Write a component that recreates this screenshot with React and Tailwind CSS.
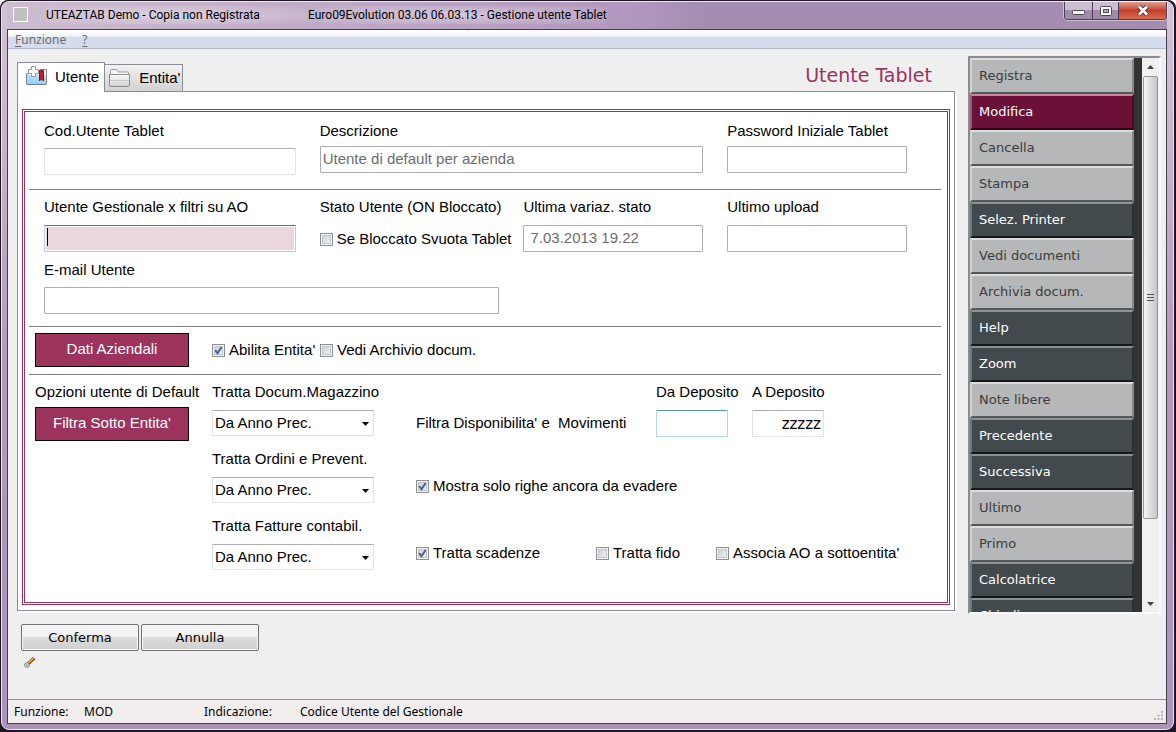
import { useState } from "react";

const menuItems = [
  { label: "Registra", tone: "off" },
  { label: "Modifica", tone: "active" },
  { label: "Cancella", tone: "off" },
  { label: "Stampa", tone: "off" },
  { label: "Selez. Printer", tone: "on" },
  { label: "Vedi documenti", tone: "off" },
  { label: "Archivia docum.", tone: "off" },
  { label: "Help", tone: "on" },
  { label: "Zoom", tone: "on" },
  { label: "Note libere", tone: "off" },
  { label: "Precedente", tone: "on" },
  { label: "Successiva", tone: "on" },
  { label: "Ultimo", tone: "off" },
  { label: "Primo", tone: "off" },
  { label: "Calcolatrice", tone: "on" },
  { label: "Chiudi", tone: "on" },
];

const tones = {
  off: "bg-[#b5b7b9] text-[#3c3c3c] border-t-[#dcdddd] border-l-[#d0d1d2] border-r-[#85878a] border-b-[#55585a]",
  on: "bg-[#434a4d] text-white border-t-[#8c9294] border-l-[#70777a] border-r-[#2b3032] border-b-[#15181a]",
  active: "bg-[#6b1138] text-white border-t-[#c08aa0] border-l-[#9c5673] border-r-[#480a25] border-b-[#2c0415]",
};

const boxes = {
  plain: "border-[#e2e3ea] border-t-[#abadb3] bg-white",
  grey: "border-[#abadb3] bg-white",
  focus: "border-[#b5cfe7] border-t-[#3d7bad] bg-[#ead6dd] shadow-[inset_0_0_0_1px_#fff]",
  hot: "border-[#b5d5ea] border-t-[#5794bf] bg-white",
};

const TextBox = ({ id, look = "grey", className = "px-0.5", ...rest }) => (
  <input
    id={id}
    type="text"
    className={`block h-[27px] w-full rounded-[1px] border pb-0.5 text-[15px] text-[#6d6d6d] outline-none ${boxes[look]} ${className}`}
    {...rest}
  />
);

const Check = ({ id, label, checked = false, className = "" }) => {
  const [on, setOn] = useState(checked);
  return (
    <label htmlFor={id} className={`flex items-center gap-1 whitespace-nowrap leading-[18px] ${className}`}>
      <span className="relative block size-[13px]">
        <input
          id={id}
          type="checkbox"
          checked={on}
          onChange={() => setOn(!on)}
          className="block size-[13px] appearance-none border border-[#8e8f8f] bg-linear-to-br from-[#c9ccd4] to-[#f6f6f6] shadow-[inset_0_0_0_1px_#f4f4f4,inset_0_0_0_2px_#c2c5cb]"
        />
        {on && (
          <svg viewBox="0 0 13 13" className="pointer-events-none absolute inset-0 size-[13px]">
            <path d="M3.2 6.2 L5.5 9.3 L9.6 3" fill="none" stroke="#4b5f97" strokeWidth="2" />
          </svg>
        )}
      </span>
      {label}
    </label>
  );
};

const YearSelect = ({ id, label }) => (
  <div className="flex flex-col">
    <label htmlFor={id} className="whitespace-nowrap leading-[18px]">{label}</label>
    <div className="relative mt-[9px]">
      <select
        id={id}
        className="block h-[26px] w-full appearance-none rounded-[1px] border border-[#e2e3ea] border-t-[#abadb3] bg-white px-0.5 text-[15px] text-black outline-none"
      >
        <option>Da Anno Prec.</option>
        <option>Da Anno Corr.</option>
      </select>
      <svg viewBox="0 0 7 4" className="pointer-events-none absolute right-[5px] top-3 h-1 w-[7px]">
        <path d="M0 0h7L3.500 4z" fill="#000" />
      </svg>
    </div>
  </div>
);

const BookmarkFolder = () => (
  <svg viewBox="0 0 22 20" className="mb-1 h-5 w-[22px]">
    <defs>
      <linearGradient id="blue" x1="0" y1="0" x2="0" y2="1">
        <stop offset="0" stopColor="#b4dffd" />
        <stop offset="1" stopColor="#8fd0ff" />
      </linearGradient>
    </defs>
    <path d="M.5 7.500h12l1.500-4h6.500V18q0 .5-.5.5H1q-.5 0-.5-.5z" fill="#f7f7f7" stroke="#8b8b8b" />
    <path d="M1 9h19v9H1z" fill="url(#blue)" />
    <path d="M1 18.500h19" stroke="#6f7f8c" />
    <path d="M5.500.5h4v3h3v4h-3v3h-4v-3h-3v-4h3z" fill="#fff" stroke="#999" />
    <path d="M13.500 4.500h4v10.500l-2-2-2 2z" fill="#c41e24" stroke="#8d1519" />
  </svg>
);

const GreyFolder = () => (
  <svg viewBox="0 0 22 20" className="h-5 w-[22px]">
    <defs>
      <linearGradient id="grey" x1="0" y1="0" x2="0" y2="1">
        <stop offset="0" stopColor="#fafafa" />
        <stop offset="1" stopColor="#d2d2d2" />
      </linearGradient>
    </defs>
    <path d="M1.500 8V2.500q0-1 1-1H7q1 0 1.500 1L9.500 4h9q1 0 1 1v3" fill="#f6f6f6" stroke="#9a9a9a" />
    <path d="M.5 6.500h20V17q0 1.500-1.500 1.500H2Q.5 18.500.5 17z" fill="url(#grey)" stroke="#8c8c8c" />
    <path d="M1 12.500h19" stroke="#c9c9c9" />
  </svg>
);

const KeyIcon = () => (
  <svg viewBox="0 0 11 11" className="size-[11px]">
    <path d="M4.500 6.500L10 1" stroke="#6b4a10" strokeWidth="3.200" />
    <path d="M4.500 6L9.500 1" stroke="#f0bd45" strokeWidth="1.600" />
    <circle cx="3" cy="8" r="2.300" fill="#fff" stroke="#6a6a6a" />
    <circle cx="3" cy="8" r="0.700" fill="#333" />
  </svg>
);

const TitleBar = () => (
  <header className="flex h-[27px] items-start bg-linear-to-r from-[#cdbdd0] via-[#b196bd] via-55% to-[#a48db0] to-60% pl-1.5">
    <span className="mt-[5px] size-[15px] border border-white bg-[#c0c0c0]" />
    <h1 className="flex h-[25px] items-center whitespace-pre pl-[18px] font-['Roboto',sans-serif] text-[12px] text-black">
      <span className="w-[262px] bg-radial from-white/40 to-transparent">UTEAZTAB Demo - Copia non Registrata</span>
      <span className="bg-radial from-white/40 to-transparent">Euro09Evolution 03.06 06.03.13 - Gestione utente Tablet</span>
    </h1>
    <div className="ml-auto flex h-[18px] rounded-b-[4px] border border-t-0 border-[#4b3d54] shadow-[0_0_0_1px_#ffffff70]">
      <button type="button" aria-label="Riduci" className="flex w-[27px] items-center justify-center rounded-bl-[3px] bg-linear-to-b from-[#cabfd0] from-50% to-[#a08dac] to-50%">
        <svg viewBox="0 0 13 5" className="mt-1 h-[5px] w-[13px]">
          <rect x=".5" y=".5" width="12" height="4" rx="1" fill="#fff" stroke="#4f4758" />
        </svg>
      </button>
      <button type="button" aria-label="Ingrandisci" className="flex w-[27px] items-center justify-center border-x border-[#4b3d54] bg-linear-to-b from-[#cabfd0] from-50% to-[#a08dac] to-50%">
        <svg viewBox="0 0 12 10" className="h-2.5 w-3">
          <rect x=".5" y=".5" width="11" height="9" rx="1" fill="#fff" stroke="#4f4758" />
          <rect x="3.500" y="3.500" width="5" height="3" fill="#b5a6c0" stroke="#4f4758" />
        </svg>
      </button>
      <button type="button" aria-label="Chiudi" className="flex w-[47px] items-center justify-center rounded-br-[3px] bg-linear-to-b from-[#dfa093] via-[#c0402b] via-50% to-[#d66c50]">
        <svg viewBox="0 0 12 11" className="h-[11px] w-3">
          <path d="M2 1.500L10 9.500M10 1.500L2 9.500" stroke="#4a3540" strokeWidth="4.500" />
          <path d="M2 1.500L10 9.500M10 1.500L2 9.500" stroke="#fff" strokeWidth="2.600" />
        </svg>
      </button>
    </div>
  </header>
);

const SideMenu = () => (
  <aside className="w-[193px] shrink-0">
    <div className="flex h-0 min-h-full overflow-hidden border-2 border-[#fafafa] border-l-[#8c8c8c] border-t-[#8c8c8c] bg-[#333331]">
      <nav className="min-w-0 flex-1 overflow-hidden pr-2 font-['DejaVu_Sans',sans-serif] text-[13px]">
        {menuItems.map((item) => (
          <button
            key={item.label}
            type="button"
            className={`block h-9 w-full border-2 px-[7px] text-left ${tones[item.tone]}`}
          >
            {item.label}
          </button>
        ))}
      </nav>
      <div className="flex w-[17px] flex-col items-center bg-[#f0f0f0]">
        <svg viewBox="0 0 7 4" className="my-[7px] h-1 w-[7px]">
          <path d="M0 4L3.500 0L7 4z" fill="#444" />
        </svg>
        <div className="flex w-[15px] flex-1 flex-col items-center justify-center gap-0.5 rounded-[2px] border border-[#979797] bg-linear-to-r from-[#f5f5f5] to-[#c6c6cb]">
          <span className="h-px w-[7px] bg-[#555]" />
          <span className="h-px w-[7px] bg-[#555]" />
          <span className="h-px w-[7px] bg-[#555]" />
        </div>
        <svg viewBox="0 0 7 4" className="mb-1.5 mt-[83px] h-1 w-[7px]">
          <path d="M0 0h7L3.500 4z" fill="#444" />
        </svg>
      </div>
    </div>
  </aside>
);

const fieldGrid = "grid grid-cols-[minmax(0,21fr)_minmax(0,15fr)_minmax(0,15fr)_minmax(0,15fr)] gap-x-6 pl-[19px] pr-10";
const maroonButton = "block h-[34px] w-[154px] border border-black bg-[#9c335d] pb-0.5 text-center text-[15px] text-white";
const greyButton =
  "h-[27px] w-[118px] rounded-[2px] border border-[#707070] bg-linear-to-b from-[#f2f2f2] from-50% via-[#dddddd] via-50% to-[#cfcfcf] font-['DejaVu_Sans',sans-serif] text-[13px] text-black shadow-[inset_0_0_0_1px_#fafafa]";

const UserForm = () => (
  <form
    onSubmit={(event) => event.preventDefault()}
    className="border-3 border-double border-[#9c335d] bg-white pb-8 text-[15px] leading-[18px] text-black"
  >
    <div className={`pb-3.5 pt-2.5 ${fieldGrid}`}>
      <div>
        <label htmlFor="codice" className="block whitespace-nowrap">Cod.Utente Tablet</label>
        <TextBox id="codice" look="plain" className="mt-2 px-0.5" />
      </div>
      <div className="col-span-2">
        <label htmlFor="descrizione" className="block whitespace-nowrap">Descrizione</label>
        <TextBox id="descrizione" className="mt-1.5 px-0.5" defaultValue="Utente di default per azienda" />
      </div>
      <div>
        <label htmlFor="password" className="block whitespace-nowrap">Password Iniziale Tablet</label>
        <TextBox id="password" className="mt-1.5 px-0.5" />
      </div>
    </div>

    <hr className="ml-1 mr-1.5 border-[#808080]" />

    <div className={`pb-3 pt-2 ${fieldGrid}`}>
      <div className="relative">
        <label htmlFor="gestionale" className="block whitespace-nowrap">Utente Gestionale x filtri su AO</label>
        <TextBox id="gestionale" look="focus" className="mt-[9px] px-0.5" />
        <span className="absolute bottom-1.5 left-[3px] h-[18px] w-px bg-black" />
      </div>
      <div>
        <p className="whitespace-nowrap">Stato Utente (ON Bloccato)</p>
        <Check id="svuota" label="Se Bloccato Svuota Tablet" className="mt-3.5" />
      </div>
      <div>
        <label htmlFor="variazione" className="block whitespace-nowrap">Ultima variaz. stato</label>
        <TextBox id="variazione" className="mt-[9px] pl-1.5" defaultValue="7.03.2013 19.22" />
      </div>
      <div>
        <label htmlFor="upload" className="block whitespace-nowrap">Ultimo upload</label>
        <TextBox id="upload" className="mt-[9px] px-0.5" />
      </div>
      <div className="col-span-2 mt-[9px]">
        <label htmlFor="email" className="block whitespace-nowrap">E-mail Utente</label>
        <TextBox id="email" className="mt-2 px-0.5" />
      </div>
    </div>

    <hr className="ml-1 mr-1.5 border-[#808080]" />

    <div className="flex items-center pb-[7px] pl-2.5 pt-1.5">
      <button type="button" className={maroonButton}>Dati Aziendali</button>
      <Check id="abilita" label="Abilita Entita'" checked className="ml-[23px] w-[108px]" />
      <Check id="archivio" label="Vedi Archivio docum." />
    </div>

    <hr className="ml-1 mr-1.5 border-[#808080]" />

    <div className="flex pl-2.5 pt-2">
      <div className="w-[177px] shrink-0">
        <p className="whitespace-nowrap">Opzioni utente di Default</p>
        <button type="button" className={`mt-1.5 ${maroonButton}`}>Filtra Sotto Entita'</button>
      </div>
      <div className="flex w-[162px] shrink-0 flex-col gap-3.5">
        <YearSelect id="magazzino" label="Tratta Docum.Magazzino" />
        <YearSelect id="ordini" label="Tratta Ordini e Prevent." />
        <YearSelect id="fatture" label="Tratta Fatture contabil." />
      </div>
      <div className="flex flex-col pl-[42px]">
        <div className="flex items-end">
          <p className="w-60 whitespace-pre pb-[5px]">Filtra Disponibilita' e  Movimenti</p>
          <div className="w-24">
            <label htmlFor="daDeposito" className="block whitespace-nowrap">Da Deposito</label>
            <TextBox id="daDeposito" look="hot" className="mt-[9px] max-w-[72px]" />
          </div>
          <div className="w-24">
            <label htmlFor="aDeposito" className="block whitespace-nowrap">A Deposito</label>
            <input
              id="aDeposito"
              type="text"
              defaultValue="zzzzz"
              className="mt-[9px] block h-[27px] w-[72px] rounded-[1px] border border-[#e2e3ea] border-t-[#abadb3] px-0.5 text-right font-['DejaVu_Sans',sans-serif] text-[15px] text-black outline-none"
            />
          </div>
        </div>
        <Check id="evadere" label="Mostra solo righe ancora da evadere" checked className="mt-10" />
        <div className="mt-[49px] flex">
          <Check id="scadenze" label="Tratta scadenze" checked className="w-[180px]" />
          <Check id="fido" label="Tratta fido" className="w-[120px]" />
          <Check id="associa" label="Associa AO a sottoentita'" />
        </div>
      </div>
    </div>
  </form>
);

export default function App() {
  return (
    <div className="flex min-h-screen flex-col rounded-t-lg border border-b-2 border-r-2 border-[#1d1622] bg-[#1d1622] font-['Noto_Sans',sans-serif]">
      <div className="flex flex-1 flex-col rounded-lg border border-[#f0e4f2] bg-linear-to-b from-[#d3c3d6] via-[#b598bd] via-50% to-[#ab93b9] pb-[5px] pl-[5px] pr-1.5">
        <TitleBar />
        <div className="flex flex-1 flex-col border border-[#4a3c50] bg-[#efefef]">
          <div className="flex h-[19px] items-center gap-4 border-b border-[#b6bccc] bg-linear-to-b from-white from-10% via-[#eef2f8] via-35% to-[#d5dcee] to-40% pl-[7px] pt-0.5 text-[12px] text-[#6d6d6d]">
            <button type="button"><span className="underline underline-offset-2">F</span>unzione</button>
            <button type="button" className="underline underline-offset-2">?</button>
          </div>

          <main className="flex gap-[11px] pl-[9px] pr-[5px] pt-[7px]">
            <div className="flex min-w-0 flex-1 flex-col font-['Liberation_Sans',Arial,sans-serif]">
              <div className="flex h-[35px] items-end text-[15px] text-black" role="tablist">
                <button type="button" role="tab" aria-selected="true" className="z-10 -mb-px flex h-[30px] items-center gap-[7px] border border-b-0 border-[#898c95] bg-white pl-2 pr-[5px]">
                  <BookmarkFolder />
                  <span>Utente</span>
                </button>
                <button type="button" role="tab" aria-selected="false" className="flex h-[27px] items-center gap-2 border border-b-0 border-l-0 border-[#898c95] bg-linear-to-b from-[#f2f2f2] to-[#d2d2d2] pl-1 pr-0.5">
                  <GreyFolder />
                  <span>Entita'</span>
                </button>
                <h2 className="mb-1 ml-auto mr-[25px] font-['DejaVu_Sans',sans-serif] text-[19px] leading-6 text-[#9c335d]">Utente Tablet</h2>
              </div>
              <div className="mb-[3px] mr-0.5 border border-[#898c95] bg-white px-1 pb-[5px] pt-[17px] shadow-[2px_2px_0_#fff]">
                <UserForm />
              </div>
            </div>
            <SideMenu />
          </main>

          <div className="flex gap-0.5 pl-[13px] pt-2.5">
            <button type="button" className={greyButton}>Conferma</button>
            <button type="button" className={greyButton}>Annulla</button>
          </div>
          <div className="pl-4 pt-1.5">
            <KeyIcon />
          </div>

          <footer className="mt-auto flex h-6 items-center border-t border-[#8f8f8f] bg-[#f1eded] pl-1.5 text-[12px] text-black">
            <span className="w-[70px]">Funzione:</span>
            <span className="w-[120px]">MOD</span>
            <span className="w-24">Indicazione:</span>
            <span>Codice Utente del Gestionale</span>
            <svg viewBox="0 0 10 10" className="ml-auto mr-0.5 mt-2 size-2.5" fill="#b5b2b2">
              <path d="M7 0h2v2H7zM7 3.500h2v2H7zM7 7h2v2H7zM3.500 3.500h2v2h-2zM3.500 7h2v2h-2zM0 7h2v2H0z" />
            </svg>
          </footer>
        </div>
      </div>
    </div>
  );
}
